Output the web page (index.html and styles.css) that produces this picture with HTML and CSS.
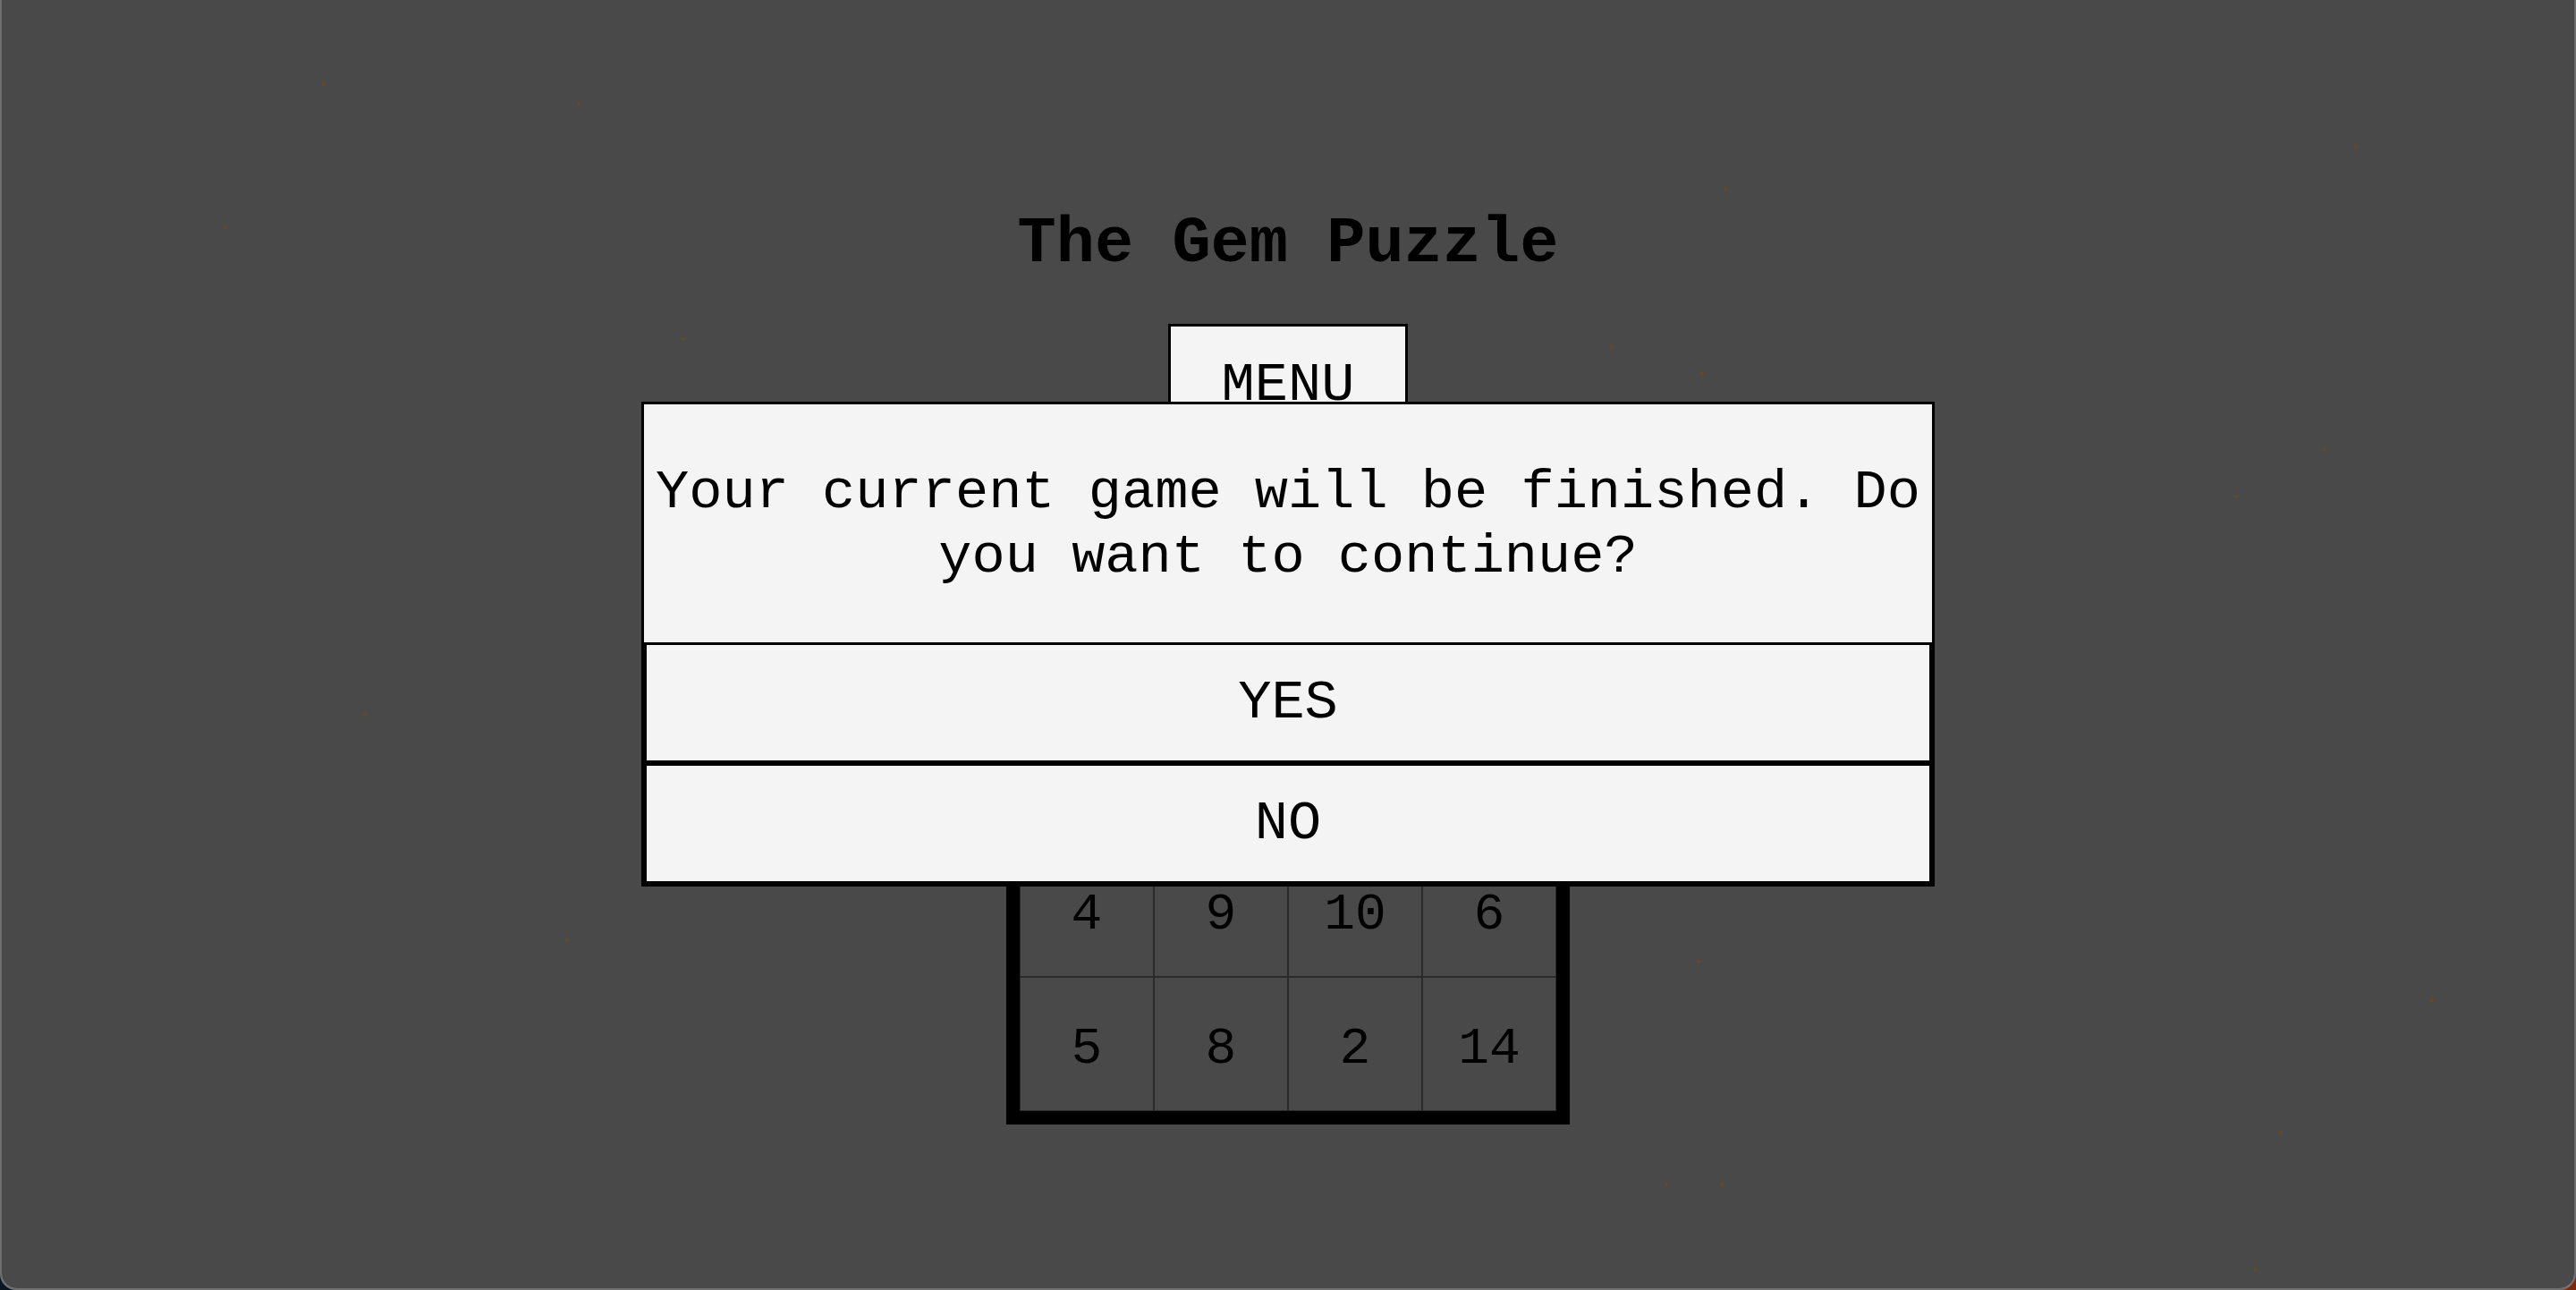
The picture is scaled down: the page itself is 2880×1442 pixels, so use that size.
FILE: index.html
```html
<!DOCTYPE html>
<html lang="en">
<head>
<meta charset="utf-8">
<title>The Gem Puzzle</title>
<link rel="stylesheet" href="styles.css">
</head>
<body>
<div class="window">
  <main class="content">
    <h1 class="title">The Gem Puzzle</h1>
    <button class="menu">MENU</button>
    <div class="board">
      <div class="cell">1</div><div class="cell">3</div><div class="cell">7</div><div class="cell">11</div>
      <div class="cell">12</div><div class="cell">13</div><div class="cell">15</div><div class="cell empty"></div>
      <div class="cell">4</div><div class="cell">9</div><div class="cell">10</div><div class="cell">6</div>
      <div class="cell">5</div><div class="cell">8</div><div class="cell">2</div><div class="cell">14</div>
    </div>
  </main>
  <div class="overlay"></div>
  <div class="sparks">
    <span class="spark" style="left:358px;top:92px"></span>
    <span class="spark" style="left:643px;top:114px"></span>
    <span class="spark" style="left:248px;top:252px"></span>
    <span class="spark" style="left:1925px;top:209px"></span>
    <span class="spark" style="left:2630px;top:162px"></span>
    <span class="spark" style="left:2496px;top:553px"></span>
    <span class="spark" style="left:2595px;top:500px"></span>
    <span class="spark" style="left:404px;top:797px"></span>
    <span class="spark" style="left:1895px;top:1073px"></span>
    <span class="spark" style="left:2546px;top:1264px"></span>
    <span class="spark" style="left:2715px;top:1117px"></span>
    <span class="spark" style="left:1921px;top:1322px"></span>
    <span class="spark" style="left:1859px;top:1322px"></span>
    <span class="spark" style="left:760px;top:377px"></span>
    <span class="spark" style="left:1798px;top:386px"></span>
    <span class="spark" style="left:1899px;top:415px"></span>
    <span class="spark" style="left:630px;top:1049px"></span>
    <span class="spark" style="left:2517px;top:1417px"></span>
  </div>
  <div class="modal">
    <p class="msg">Your current game will be finished. Do you want to continue?</p>
    <button class="choice">YES</button>
    <button class="choice">NO</button>
  </div>
</div>
</body>
</html>
```
FILE: styles.css
```css
html, body {
  margin: 0;
  padding: 0;
}
body {
  background: linear-gradient(to right, #0b1622 50%, #7a2a12 50%);
  font-family: "Liberation Mono", "Courier New", monospace;
  color: #000;
}
.window {
  position: relative;
  height: 1442px;
  box-sizing: border-box;
  border-left: 2px solid #6e6e6e;
  border-right: 2px solid #6e6e6e;
  border-bottom: 2px solid #707070;
  border-radius: 0 0 18px 18px;
  background: #f5f5f5;
  overflow: hidden;
}
.content {
  display: flex;
  flex-direction: column;
  align-items: center;
  padding-top: 237px;
}
.title {
  margin: 0;
  font-size: 72px;
  line-height: 72px;
  font-weight: bold;
}
.menu {
  position: relative;
  z-index: 3;
  margin-top: 53px;
  width: 268px;
  height: 132px;
  box-sizing: border-box;
  border: 3px solid #000;
  background: #f4f4f4;
  font-family: inherit;
  font-size: 62px;
  line-height: 70px;
  padding: 31px 0 0;
  display: flex;
  justify-content: center;
  align-items: flex-start;
  color: #000;
}
.board {
  margin-top: 133px;
  display: grid;
  grid-template-columns: repeat(4, 150px);
  grid-auto-rows: 150px;
  border: 15px solid #000;
}
.cell {
  box-sizing: border-box;
  border: 1px solid #8c8c8c;
  padding-top: 10px;
  display: flex;
  align-items: center;
  justify-content: center;
  font-size: 58px;
}
.overlay {
  position: absolute;
  inset: 0;
  z-index: 2;
  background: rgba(0, 0, 0, 0.7);
}
.sparks {
  position: absolute;
  inset: 0;
  z-index: 2;
}
.spark {
  position: absolute;
  width: 4px;
  height: 4px;
  border-radius: 50%;
  background: #5f4a2a;
}
.modal {
  position: absolute;
  z-index: 4;
  left: 50%;
  top: 50%;
  transform: translate(-50%, -50%);
  width: 1446px;
  box-sizing: border-box;
  border: 3px solid #000;
  background: #f4f4f4;
  display: flex;
  flex-direction: column;
}
.msg {
  margin: 0;
  padding: 63px 0 59px;
  font-size: 62px;
  line-height: 72px;
  text-align: center;
}
.choice {
  height: 135px;
  box-sizing: border-box;
  border: 3px solid #000;
  background: #f4f4f4;
  font-family: inherit;
  font-size: 62px;
  color: #000;
  display: flex;
  align-items: center;
  justify-content: center;
  padding: 0;
}
```
